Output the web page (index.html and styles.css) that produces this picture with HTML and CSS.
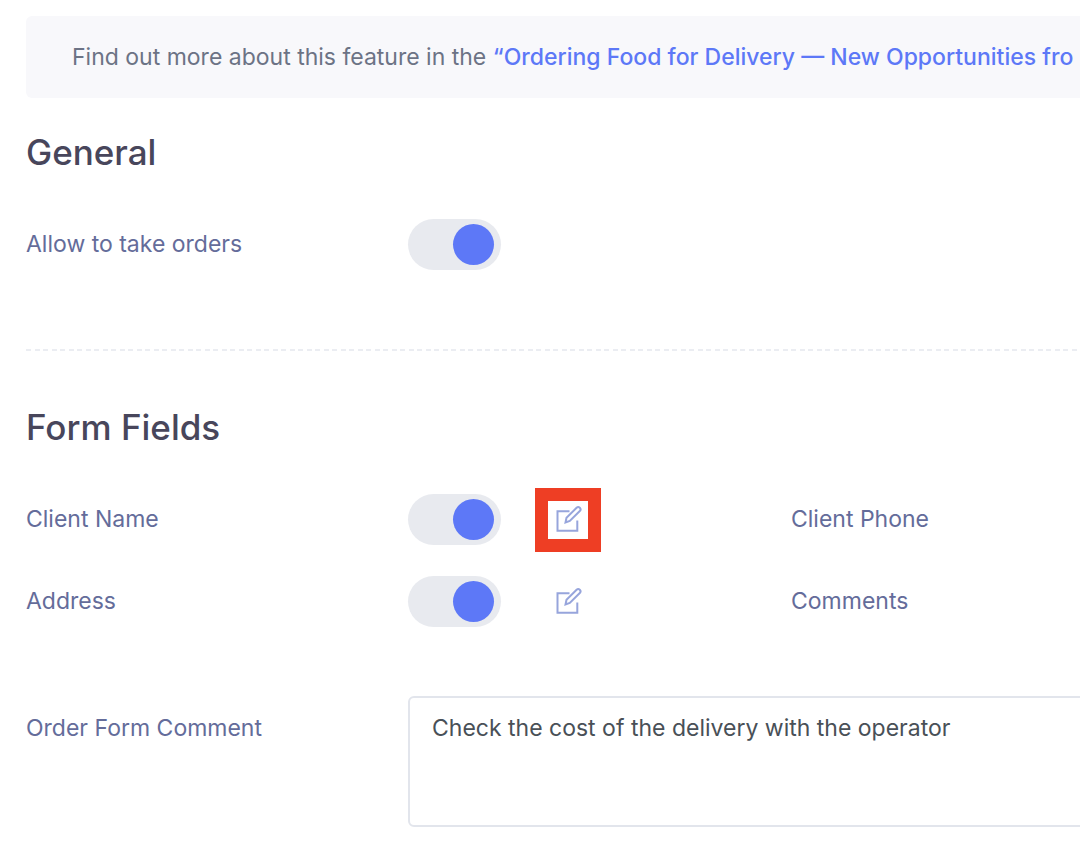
FILE: index.html
```
<!DOCTYPE html>
<html lang="en">
  <head>
    <meta charset="UTF-8" />
    <meta name="viewport" content="width=device-width, initial-scale=1.0" />
    <title>Order settings</title>
    <link rel="stylesheet" href="styles.css">
  </head>
  <body>
    <main class="settings">
      <p class="notice">
        Find out more about this feature in the
        <a href="#">“Ordering Food for Delivery — New Opportunities fro</a>
      </p>

      <form>
        <section class="general">
          <h2>General</h2>
          <div class="fields">
            <label for="take-orders">Allow to take orders</label>
            <div class="control">
              <input class="switch" type="checkbox" role="switch" id="take-orders" checked />
            </div>
          </div>
        </section>

        <section class="form-fields">
          <h2>Form Fields</h2>
          <div class="fields">
            <label for="client-name">Client Name</label>
            <div class="control">
              <input class="switch" type="checkbox" role="switch" id="client-name" checked />
              <button class="edit highlight" type="button" aria-label="Edit client name">
                <svg viewBox="0 0 26 26">
                  <path d="M14.5 4.2H2.5v19.5h19.8V13.5" />
                  <path d="M10.5 15.5l1-4.8L21.6 .8a2.2 2.2 0 0 1 3.2 3.2L14.8 14z" />
                </svg>
              </button>
            </div>
            <span class="name">Client Phone</span>

            <label for="address">Address</label>
            <div class="control">
              <input class="switch" type="checkbox" role="switch" id="address" checked />
              <button class="edit" type="button" aria-label="Edit address">
                <svg viewBox="0 0 26 26">
                  <path d="M14.5 4.2H2.5v19.5h19.8V13.5" />
                  <path d="M10.5 15.5l1-4.8L21.6 .8a2.2 2.2 0 0 1 3.2 3.2L14.8 14z" />
                </svg>
              </button>
            </div>
            <span class="name">Comments</span>
          </div>

          <div class="fields comment">
            <label for="comment">Order Form Comment</label>
            <textarea id="comment">Check the cost of the delivery with the operator</textarea>
          </div>
        </section>
      </form>
    </main>
  </body>
</html>
```
FILE: styles.css
```
* {
  margin: 0;
  padding: 0;
  box-sizing: border-box;
}

body {
  background: #fff;
  color: #6c7385;
  font-family: "Inter", sans-serif;
  font-size: 23px;
  line-height: 32px;
  overflow-x: hidden;
}

.settings {
  padding: 16px 0 16px 26px;
}

/* the notice and the textarea run past the right edge of the window */
.notice {
  margin-right: -24px;
  padding: 25px 0 25px 46px;
  border-radius: 6px;
  background: #f8f8fb;
  white-space: nowrap;
  overflow: hidden;
}

.notice a {
  color: #5d78f7;
  font-weight: 500;
  text-decoration: none;
}

h2 {
  color: #48465b;
  font-size: 35px;
  font-weight: 500;
  line-height: 40px;
  margin-bottom: 47px;
}

.general {
  padding: 34px 0 79px;
}

/* dashed divider */
.form-fields::before {
  content: "";
  display: block;
  height: 2px;
  margin-bottom: 56px;
  background: repeating-linear-gradient(to right, #ebedf2 0 5px, transparent 5px 9px, #ebedf2 9px 14px, transparent 14px 17px);
}

.fields {
  display: grid;
  grid-template-columns: 382px 383px 1fr;
  row-gap: 31px;
}

label,
.name {
  color: #646c9a;
  line-height: 50px;
}

.control {
  display: flex;
  align-items: center;
  gap: 47px;
}

.switch {
  appearance: none;
  display: flex;
  justify-content: flex-end;
  align-items: center;
  width: 93px;
  height: 51px;
  padding: 0 7px;
  border-radius: 26px;
  background: #e8eaef;
  cursor: pointer;
}

.switch::before {
  content: "";
  width: 41px;
  height: 41px;
  border-radius: 50%;
  background: #5d78f7;
}

.switch:not(:checked) {
  justify-content: flex-start;
}

.edit {
  display: flex;
  justify-content: center;
  align-items: center;
  width: 40px;
  height: 38px;
  border: none;
  background: none;
  cursor: pointer;
}

.highlight {
  outline: 13px solid #ee3e24;
}

.edit svg {
  width: 26px;
  height: 26px;
  overflow: visible;
  fill: none;
  stroke: #97a5dc;
  stroke-width: 2;
}

.comment {
  margin-top: 69px;
}

.comment label {
  line-height: 64px;
}

textarea {
  grid-column: 2 / -1;
  height: 131px;
  margin-right: -24px;
  padding: 14px 22px;
  border: 2px solid #e2e5ec;
  border-radius: 6px;
  color: #495057;
  font: inherit;
  resize: none;
  outline: none;
}
```
